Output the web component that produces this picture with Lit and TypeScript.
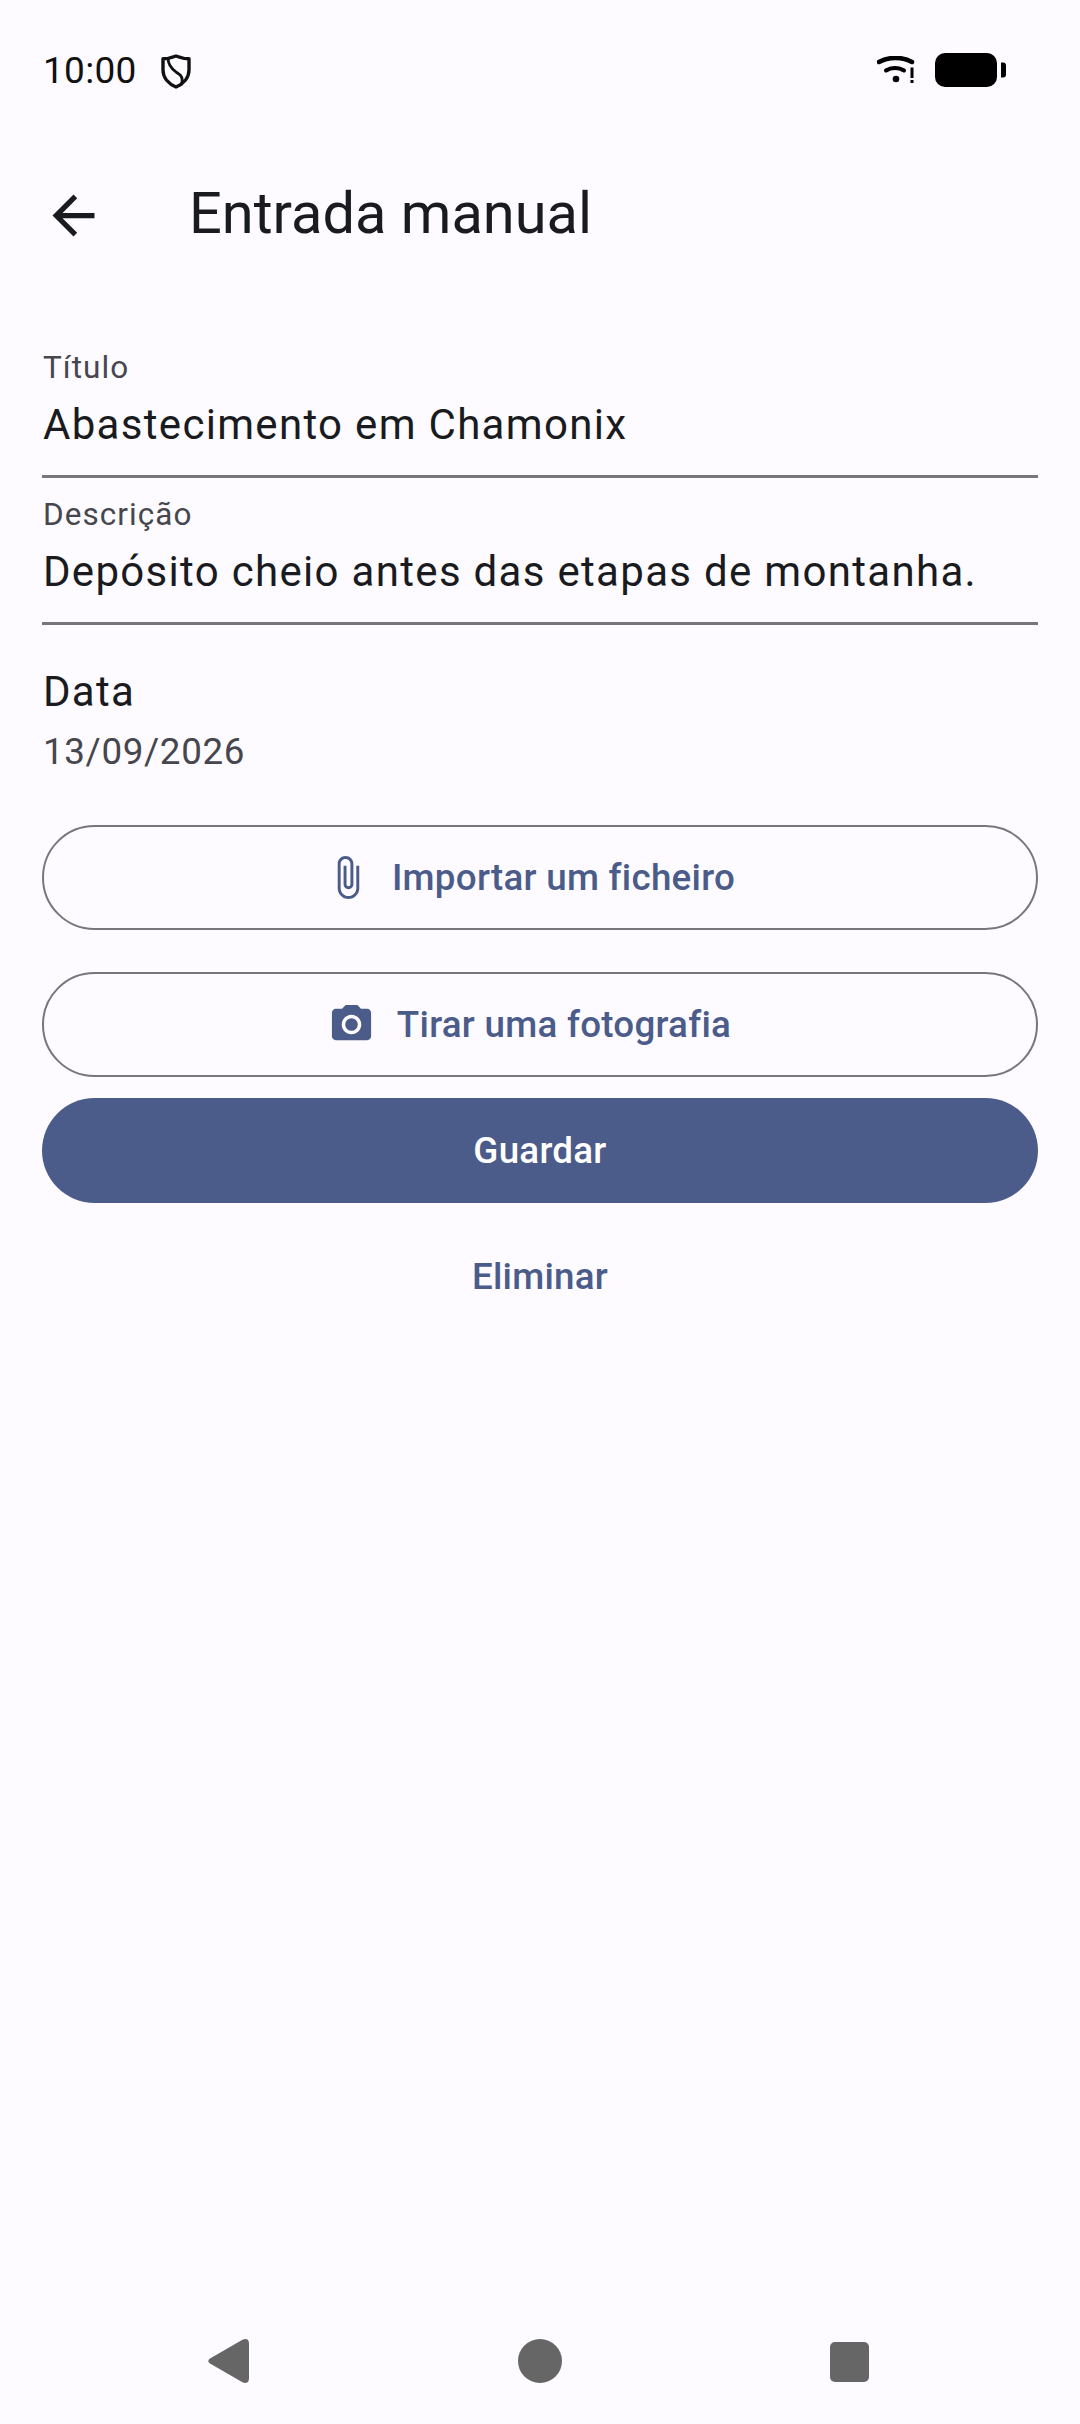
import { LitElement, html, css } from "lit";
import { customElement } from "lit/decorators.js";

@customElement("app-root")
export class AppRoot extends LitElement {
  static styles = css`
    :host { display: block; }
    .page { width: 1080px; height: 2424px; background: #fdfbff; display: flex; flex-direction: column; font-family: Roboto, sans-serif; color: #1a1b20; overflow: hidden; }
    .status { height: 140px; flex: none; display: flex; align-items: center; padding: 0 73px 0 43px; box-sizing: border-box; font-size: 37px; color: #111; }
    .status .time { letter-spacing: 0.3px; }
    .shield { width: 30px; height: 35px; margin-left: 24px; margin-top: 2px; }
    .spacer { flex: 1; }
    .wifi { width: 38px; height: 27px; margin-right: 20px; margin-top: -2px; }
    .batt { width: 72px; height: 34px; }
    .appbar { height: 147px; flex: none; display: flex; align-items: center; padding-left: 42px; }
    .back { width: 63px; height: 63px; flex: none; margin-top: 3px; }
    .title { font-size: 57.75px; margin-left: 84px; margin-bottom: 2px; }
    .form { padding: 0 42px; display: flex; flex-direction: column; margin-top: 44px; }
    .field { height: 147px; padding: 16px 0 0 1px; border-bottom: 3px solid #77767c; box-sizing: border-box; }
    .label { font-size: 31.5px; line-height: 42px; letter-spacing: 1.05px; color: #46464e; height: 48px; }
    .value { font-size: 42px; line-height: 60px; letter-spacing: 1.31px; }
    .date { margin-top: 37px; padding-left: 1px; }
    .date .k { font-size: 42px; line-height: 60px; letter-spacing: 1.31px; }
    .date .v { font-size: 36.75px; line-height: 60px; letter-spacing: 0.65px; color: #46464e; }
    .btn { height: 105px; border-radius: 53px; box-sizing: border-box; display: flex; align-items: center; justify-content: center; font-size: 36.75px; font-weight: 500; letter-spacing: 0.26px; color: #4c5c8a; }
    .outline { border: 2px solid #77767c; padding-right: 21px; }
    .b1 { margin-top: 43px; }
    .b2 { margin-top: 42px; }
    .fill { background: #4c5c8a; color: #fff; margin-top: 21px; }
    .text { margin-top: 21px; }
    .ic1 { width: 47px; height: 47px; margin-right: 21px; }
    .ic2 { width: 47px; height: 47px; margin-right: 22px; }
    .nav { margin-top: auto; height: 104px; flex: none; display: flex; justify-content: center; }
    .nav svg { width: 720px; height: 104px; }
  `;

  render() {
    return html`<div class="page">
      <div class="status">
        <span class="time">10:00</span>
        <svg class="shield" viewBox="0 0 30 35" fill="none" stroke="#111" stroke-width="3.400" stroke-linejoin="round">
          <path d="M15 2 C19 3.500 24 4.800 28 4.800 V16 C28 24 22 30 15 33 C8 30 2 24 2 16 V4.800 C6 4.800 11 3.500 15 2 Z"/>
          <path d="M7 4 C7 11 11 15 15 18 C20 21 23 24 20 31" stroke-width="2.800"/>
        </svg>
        <span class="spacer"></span>
        <svg class="wifi" viewBox="0 0 38 27">
          <path d="M2 6 C11 0.500 26 0.500 35 6" fill="none" stroke="#000" stroke-width="4.500" stroke-linecap="round"/>
          <path d="M9 14.500 C14 11 22 11 27 14.500" fill="none" stroke="#000" stroke-width="4" stroke-linecap="round"/>
          <circle cx="19" cy="23" r="3.300" fill="#000"/>
          <rect x="33.500" y="11.500" width="3" height="10.500" fill="#000"/>
          <rect x="33.500" y="24" width="3" height="3" fill="#000"/>
        </svg>
        <svg class="batt" viewBox="0 0 72 34">
          <rect x="0" y="0" width="62" height="34" rx="10" fill="#000"/>
          <path d="M66 9.500 h2 a3 3 0 0 1 3 3 v9 a3 3 0 0 1 -3 3 h-2 z" fill="#000"/>
        </svg>
      </div>
      <div class="appbar">
        <svg class="back" viewBox="0 0 24 24" fill="#1a1b20"><path d="M20 11H7.830l5.590-5.590L12 4l-8 8 8 8 1.410-1.410L7.830 13H20v-2z"/></svg>
        <span class="title">Entrada manual</span>
      </div>
      <div class="form">
        <div class="field"><div class="label">Título</div><div class="value">Abastecimento em Chamonix</div></div>
        <div class="field"><div class="label">Descrição</div><div class="value">Depósito cheio antes das etapas de montanha.</div></div>
        <div class="date"><div class="k">Data</div><div class="v">13/09/2026</div></div>
        <div class="btn outline b1">
          <svg class="ic1" viewBox="0 0 24 24" fill="#4c5c8a"><path d="M16.500 6v11.500c0 2.210-1.790 4-4 4s-4-1.790-4-4V5c0-1.380 1.120-2.500 2.500-2.500s2.500 1.120 2.500 2.500v10.500c0 .55-.45 1-1 1s-1-.45-1-1V6H10v9.500c0 1.380 1.120 2.500 2.500 2.500s2.500-1.120 2.500-2.500V5c0-2.210-1.790-4-4-4S7 2.790 7 5v12.500c0 3.040 2.460 5.500 5.500 5.500s5.500-2.460 5.500-5.500V6h-1.500z"/></svg>
          Importar um ficheiro
        </div>
        <div class="btn outline b2">
          <svg class="ic2" viewBox="0 0 24 24" fill="#4c5c8a"><circle cx="12" cy="12" r="3.200"/><path d="M9 2 7.170 4H4c-1.100 0-2 .9-2 2v12c0 1.100.9 2 2 2h16c1.100 0 2-.9 2-2V6c0-1.100-.9-2-2-2h-3.170L15 2H9zm3 15c-2.760 0-5-2.240-5-5s2.240-5 5-5 5 2.240 5 5-2.240 5-5 5z"/></svg>
          Tirar uma fotografia
        </div>
        <div class="btn fill">Guardar</div>
        <div class="btn text">Eliminar</div>
      </div>
      <div class="nav">
        <svg viewBox="0 0 720 104" fill="#666">
          <path d="M30 38.500 L62 20 Q69 17 69 24 V58 Q69 65 62 62 L30 43.500 Q26.500 41 30 38.500 Z"/>
          <circle cx="360" cy="41" r="22"/>
          <rect x="650" y="22" width="39" height="40" rx="5"/>
        </svg>
      </div>
    </div>`;
  }
}
